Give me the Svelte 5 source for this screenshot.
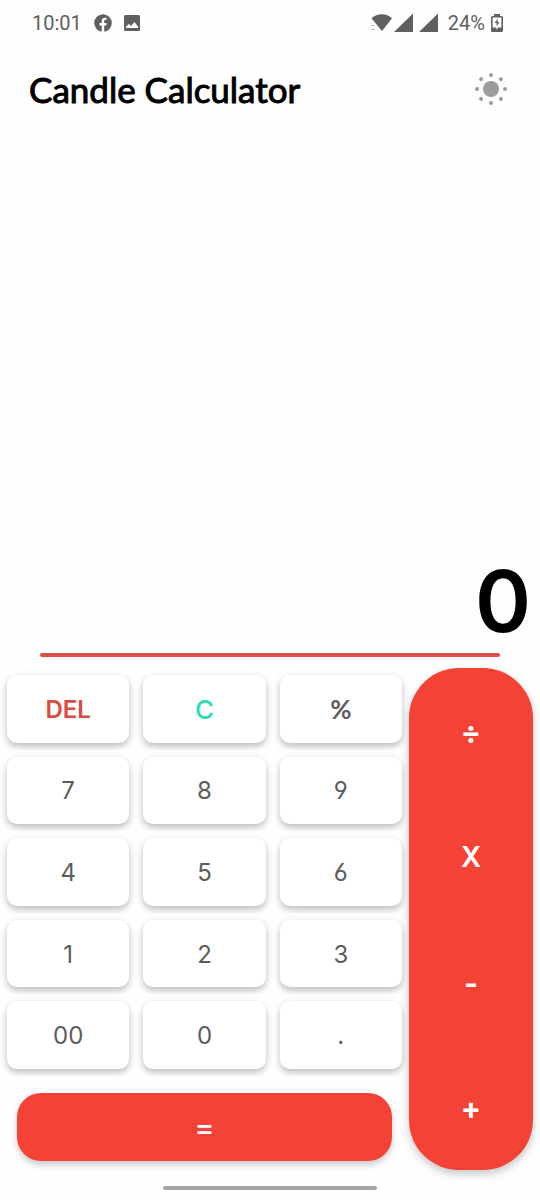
<script>
  const rows = [
    ['DEL', 'C', '%'],
    ['7', '8', '9'],
    ['4', '5', '6'],
    ['1', '2', '3'],
    ['00', '0', '.']
  ];
  const operators = ['÷', 'X', '-', '+'];
  const dots = [0, 45, 90, 135, 180, 225, 270, 315];

  let display = $state('0');

  function calculate() {
    const terms = display.replaceAll('÷', '/').replaceAll('X', '*').match(/[\d.]+|[-+*/%]/g) ?? [];
    const sums = [Number(terms[0])];
    for (let i = 1; i + 1 < terms.length; i += 2) {
      const n = Number(terms[i + 1]);
      if (terms[i] === '+') sums.push(n);
      else if (terms[i] === '-') sums.push(-n);
      else {
        const last = sums.pop();
        sums.push(terms[i] === '*' ? last * n : terms[i] === '/' ? last / n : last % n);
      }
    }
    return String(sums.reduce((a, b) => a + b, 0));
  }

  function press(key) {
    if (key === 'C') display = '0';
    else if (key === 'DEL') display = display.slice(0, -1) || '0';
    else if (key === '=') display = calculate();
    else if (display === '0' && /\d/.test(key)) display = key === '00' ? '0' : key;
    else display += key;
  }
</script>

<div class="screen">
  <div class="status">
    <span class="time">10:01</span>
    <svg class="fb" width="18" height="18" viewBox="0 0 18 18" aria-hidden="true">
      <circle cx="9" cy="9" r="8.8" fill="#606060" />
      <path d="M7.7 18v-6.5H5.5V9h2.2V7.2c0-2.3 1.3-3.5 3.3-3.5.9 0 1.6.1 1.6.1v2h-1c-1 0-1.4.6-1.4 1.3V9h2.4l-.4 2.5h-2V18z" fill="#fff" />
    </svg>
    <svg class="photo" width="16" height="16" viewBox="0 0 16 16" aria-hidden="true">
      <rect width="16" height="16" rx="1.5" fill="#606060" />
      <path d="M2 13V11.500l3-2.500 2 2L10.500 7 14 11.500V13z" fill="#fff" />
    </svg>
    <div class="signals">
      <svg width="68" height="20" viewBox="0 0 68 20" aria-hidden="true">
        <g fill="#606060">
          <path d="M.5 5.200C6-.2 15.500-.2 21 5.200L11 18z" />
          <path d="M42 .5V19H23z" />
          <path d="M67 .5V19H48z" />
        </g>
        <path d="M.5 12.500h3M.5 16.500h3" stroke="#b5b5b5" stroke-width="1" />
      </svg>
      <span>24%</span>
      <svg width="14" height="20" viewBox="0 0 14 20" aria-hidden="true">
        <path d="M4 1h6v2h1.500Q13 3 13 4.500v13Q13 19 11.500 19h-9Q1 19 1 17.500v-13Q1 3 2.500 3H4z" fill="#606060" />
        <path d="M2.600 4.600h8.800v10H7.800l-1 2.400-.6-2.400H2.600z" fill="#fff" />
        <path d="M7.800 5.500L4.600 10h2v3.500L9.500 9h-2z" fill="#606060" />
      </svg>
    </div>
  </div>

  <header>
    <h1>Candle Calculator</h1>
    <button class="theme" aria-label="Toggle theme">
      <svg width="34" height="34" viewBox="0 0 34 34" fill="#9c9c9c">
        <circle cx="17" cy="17" r="8" />
        {#each dots as angle}
          <circle cx="17" cy="3" r="2" transform="rotate({angle} 17 17)" />
        {/each}
      </svg>
    </button>
  </header>

  <output class="display">{display}</output>
  <hr />

  <main>
    <div class="left">
      <div class="keys">
        {#each rows as row}
          <div class="row">
            {#each row as key}
              <button class="key" class:del={key === 'DEL'} class:clear={key === 'C'} class:percent={key === '%'} onclick={() => press(key)}>{key}</button>
            {/each}
          </div>
        {/each}
      </div>
      <button class="equals" onclick={() => press('=')}>=</button>
    </div>
    <div class="operators">
      {#each operators as op}
        <button class:letter={op === 'X'} onclick={() => press(op)}>{op}</button>
      {/each}
    </div>
  </main>
  <div class="handle"></div>
</div>

<style>
  :global(body) { background: #fefefe; }
  .screen {
    min-height: 100vh;
    box-sizing: border-box;
    display: flex;
    flex-direction: column;
    font-family: Lato, sans-serif;
    color: #000;
  }
  button {
    border: 0;
    padding: 0;
    background: none;
    font-family: inherit;
    cursor: pointer;
  }
  .status {
    display: flex;
    align-items: center;
    height: 46px;
    padding: 0 36px 0 32px;
    font: 20px Roboto, sans-serif;
    color: #606060;
  }
  .fb { margin-left: 12px; }
  .photo { margin-left: 12px; }
  .signals { display: flex; align-items: center; margin-left: auto; }
  .signals span { margin: 0 5px 0 9px; }
  header {
    display: flex;
    align-items: center;
    justify-content: space-between;
    height: 86px;
    padding: 0 32px 0 29px;
  }
  h1 {
    margin: 0;
    font-size: 35px;
    line-height: 44px;
    font-weight: 400;
    -webkit-text-stroke: 1px currentColor;
  }
  .theme { display: flex; }
  .display {
    flex: 1;
    display: flex;
    align-items: flex-end;
    justify-content: flex-end;
    padding: 0 9px;
    font: 600 85px/102px Inter, sans-serif;
  }
  hr {
    width: calc(100% - 80px);
    height: 4px;
    margin: 0 auto;
    border: 0;
    border-radius: 2px;
    background: #dc5047;
  }
  main {
    display: flex;
    margin: 11px 7px 16px 0;
  }
  .left { flex: 1; display: flex; flex-direction: column; }
  .keys { display: grid; grid-template-rows: repeat(5, 1fr); height: 408px; }
  .row {
    display: grid;
    grid-template-columns: repeat(3, 1fr);
    gap: 14px;
    padding: 7px;
    overflow: hidden;
  }
  .key {
    padding-top: 1px;
    border-radius: 10px;
    background: #fff;
    box-shadow: 0 4px 6px rgba(0, 0, 0, .2), 0 1px 10px rgba(0, 0, 0, .07);
    font: 400 24px Inter, sans-serif;
    font-feature-settings: "cv03", "cv04";
    color: #5c5c5c;
  }
  .del {
    font: 600 24px Inter, sans-serif;
    color: #dc4a40;
  }
  .clear {
    font: 500 26px Inter, sans-serif;
    color: #26dfb0;
  }
  .percent { font: 700 26px Lato, sans-serif; }
  .equals {
    height: 68px;
    margin: 17px 17px 0;
    border-radius: 24px;
    background: #f44336;
    box-shadow: 0 4px 6px rgba(0, 0, 0, .2);
    font: 500 30px Inter, sans-serif;
    color: #fff;
  }
  .operators {
    display: grid;
    grid-template-rows: repeat(4, 1fr);
    width: 124px;
    height: 502px;
    border-radius: 50px;
    background: #f44336;
    box-shadow: 0 4px 8px rgba(0, 0, 0, .22);
  }
  .operators button {
    padding-top: 2px;
    font: 700 30px Inter, sans-serif;
    color: #fff;
  }
  .operators .letter { font-size: 28px; font-weight: 600; }
  .handle {
    width: 214px;
    height: 4px;
    margin: 0 auto 10px;
    border-radius: 2px;
    background: #a5a5a5;
  }
</style>
